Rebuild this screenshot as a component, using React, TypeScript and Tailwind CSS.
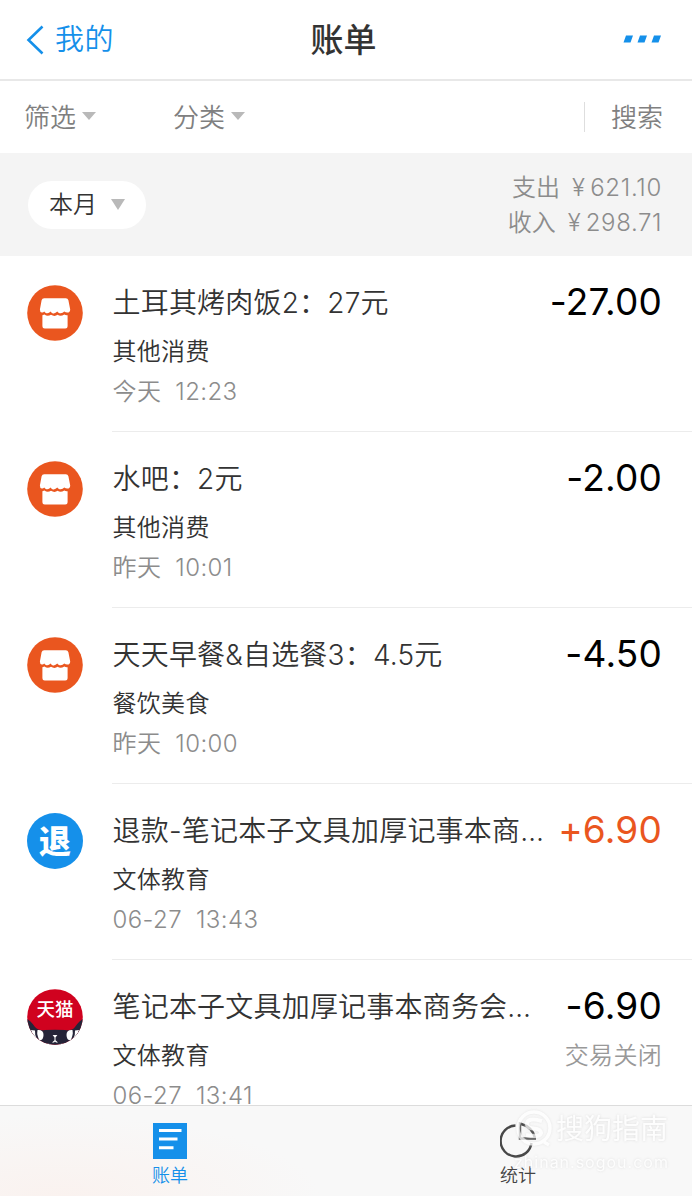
import React from "react";

type Kind = "shop" | "refund" | "tmall";

interface Bill {
  kind: Kind;
  title: string;
  truncated?: boolean;
  amount: string;
  income?: boolean;
  category: string;
  day: string;
  time: string;
  status?: string;
}

const bills: Bill[] = [
  { kind: "shop", title: "土耳其烤肉饭2：27元", amount: "-27.00", category: "其他消费", day: "今天", time: "12:23" },
  { kind: "shop", title: "水吧：2元", amount: "-2.00", category: "其他消费", day: "昨天", time: "10:01" },
  { kind: "shop", title: "天天早餐&自选餐3：4.5元", amount: "-4.50", category: "餐饮美食", day: "昨天", time: "10:00" },
  { kind: "refund", title: "退款-笔记本子文具加厚记事本商", truncated: true, amount: "+6.90", income: true, category: "文体教育", day: "06-27", time: "13:43" },
  { kind: "tmall", title: "笔记本子文具加厚记事本商务会", truncated: true, amount: "-6.90", category: "文体教育", day: "06-27", time: "13:41", status: "交易关闭" },
];

function Triangle({ className }: { className: string }) {
  return (
    <svg viewBox="0 0 14 10" preserveAspectRatio="none" className={className}>
      <path d="M0 0H14L7 10Z" fill="#b9b9b9" />
    </svg>
  );
}

function ShopIcon() {
  return (
    <svg viewBox="0 0 56 56" className="size-14">
      <circle cx="28" cy="28" r="27.8" fill="#ea561f" />
      <path
        d="M17.2 13.3H38.8Q40.9 13.3 41.4 15.3L43.2 24.5Q43.2 27.6 40.3 27.6Q38.6 27.6 37.3 26.6Q35.2 28.9 32.5 28.2Q31 27.6 30.3 26.6Q28.1 29 25.4 28.2Q24.2 27.6 23.6 26.6Q21.5 28.9 18.8 28Q17.8 27.4 17.2 26.6Q16.2 27.8 14.8 27.5Q12.8 27 12.9 24.5L14.6 15.3Q15.1 13.3 17.2 13.3Z"
        fill="#fff"
      />
      <path
        d="M15.4 30.2Q17 29.6 17.5 29.6Q20.5 32 24 29.8Q27.5 32 30.6 29.8Q33.5 32 37.3 29.6Q38.6 30.4 40.6 30.2V41.2Q40.6 43.5 38.3 43.5H17.7Q15.4 43.5 15.4 41.2Z"
        fill="#fff"
      />
    </svg>
  );
}

function RefundIcon() {
  return (
    <div className="flex size-14 items-center justify-center rounded-full bg-[#1590ea] pt-0.5 text-[32px] leading-[54px] font-black text-white">
      退
    </div>
  );
}

function TmallIcon() {
  return (
    <svg viewBox="0 0 56 56" className="size-14">
      <defs>
        <clipPath id="round">
          <circle cx="28" cy="28" r="27.8" />
        </clipPath>
      </defs>
      <g clipPath="url(#round)">
        <rect width="56" height="56" fill="#d0021f" />
        <path d="M0 30Q3 31 8 38Q12 42 18 41Q28 40.3 38 41Q45 42 48 38Q53 31 56 30V56H0Z" fill="#252438" />
        <path d="M10.5 41Q16.5 40.5 16.500 46Q16.500 51 12.500 51.500Q9.500 46 10.500 41Z" fill="#fff" />
        <path d="M45.500 41Q39.500 40.500 39.500 46Q39.500 51 43.500 51.500Q46.500 46 45.500 41Z" fill="#fff" />
        <path d="M4 41L8 41.500Q7.500 46 10 50Q6 47 4 41Z" fill="#fff" />
        <path d="M52 41L48 41.500Q48.500 46 46 50Q50 47 52 41Z" fill="#fff" />
        <path d="M25.600 46H30.400L28.500 48.600V51.200L31 53.500H29L28 52.500L27 53.500H25L27.500 51.200V48.600Z" fill="#fff" />
        <path d="M17 56Q21 53.500 25 56ZM39 56Q35 53.500 31 56Z" fill="#fff" />
      </g>
      <text x="28" y="26.500" textAnchor="middle" fontSize="18.500" fontWeight="500" fill="#fff">
        天猫
      </text>
    </svg>
  );
}

function BillIcon({ kind }: { kind: Kind }) {
  if (kind === "shop") return <ShopIcon />;
  if (kind === "refund") return <RefundIcon />;
  return <TmallIcon />;
}

function BillRow({ bill }: { bill: Bill }) {
  return (
    <div className="flex h-44 shrink-0 pl-[27px]">
      <div className="w-[85px] shrink-0 pt-[29px]">
        <BillIcon kind={bill.kind} />
      </div>
      <div className="min-w-0 flex-1 border-b border-[#ececec] pt-[26px] pr-[30px] pl-[0.5px]">
        <div className="flex h-10 items-center justify-between whitespace-nowrap">
          <span className="pt-0.5 text-[28px] leading-10 tracking-[0.2px] text-[#333]">
            {bill.title}
            {bill.truncated && <span className="tracking-[3px]">…</span>}
          </span>
          <span
            className={
              bill.income
                ? "text-[37px] leading-10 font-normal tracking-[0.2px] text-[#ea561f]"
                : "text-[37px] leading-10 font-normal tracking-[0.2px] text-black"
            }
          >
            {bill.amount}
          </span>
        </div>
        <div className="mt-2.5 flex h-10 items-center justify-between">
          <span className="text-2xl leading-10 tracking-[0.3px] text-[#333]">{bill.category}</span>
          {bill.status && <span className="text-2xl leading-10 tracking-[0.3px] text-[#999]">{bill.status}</span>}
        </div>
        <div className="flex h-10 items-center gap-3.5 text-2xl leading-10 tracking-[0.4px] text-[#8c8c8c]">
          <span>{bill.day}</span>
          <span>{bill.time}</span>
        </div>
      </div>
    </div>
  );
}

function Watermark() {
  return (
    <div className="absolute top-0.5 left-[514px] flex flex-col font-normal text-white opacity-75 [text-shadow:0_0_3px_#d0d0d0]">
      <div className="flex items-center gap-0.5">
        <svg viewBox="0 0 40 40" className="size-10 [filter:drop-shadow(0_0_1px_#ddd)]">
          <circle cx="20" cy="19" r="16" fill="none" stroke="#fff" strokeWidth="3.5" />
          <path d="M28 12Q13 8 13 15Q13 19 20 19.500Q27 20 27 24Q26 29 12 26" fill="none" stroke="#fff" strokeWidth="4" />
          <path d="M30 33L35 36" stroke="#fff" strokeWidth="3.500" />
        </svg>
        <span className="text-[28px] leading-[42px]">搜狗指南</span>
      </div>
      <span className="text-base leading-6 tracking-[1px]">zhinan.sogou.com</span>
    </div>
  );
}

export default function App() {
  return (
    <div className="flex h-[1196px] w-[692px] flex-col overflow-hidden bg-white font-['Inter','Noto_Sans_CJK_SC',sans-serif] font-[350]">
      <header className="flex h-[81px] shrink-0 items-center border-b-2 border-[#e8e8e8] pr-[31px] pl-[26px]">
        <div className="flex flex-1 items-center gap-[11px] text-[#1590ea]">
          <svg viewBox="0 0 18 30" className="h-[30px] w-[18px]">
            <path d="M16.500 1.500L2.500 15L16.500 28.500" fill="none" stroke="currentColor" strokeWidth="2.600" />
          </svg>
          <span className="text-[29px] leading-10 tracking-[0.5px]">我的</span>
        </div>
        <h1 className="text-[33px] leading-10 font-medium text-[#333]">账单</h1>
        <div className="flex flex-1 justify-end">
          <svg viewBox="0 0 38 8" className="mb-0.5 h-2 w-[38px] fill-[#1590ea]">
            <path d="M3 0.500H10L7.500 7.500H0.500ZM17 0.500H24L21.500 7.500H14.500ZM31 0.500H38L35.500 7.500H28.500Z" />
          </svg>
        </div>
      </header>

      <nav className="flex h-[72px] shrink-0 items-center pt-0.5 pr-[29px] pl-6 text-[26px] leading-10 text-[#808080]">
        <div className="flex w-[149px] items-center gap-1.5">
          筛选
          <Triangle className="mb-1 h-2 w-3.5" />
        </div>
        <div className="flex items-center gap-1.5">
          分类
          <Triangle className="mb-1 h-2 w-3.5" />
        </div>
        <div className="ml-auto flex items-center gap-[26px]">
          <span className="mb-0.5 h-[30px] w-px bg-[#dedede]" />
          搜索
        </div>
      </nav>

      <section className="flex h-[103px] shrink-0 items-center justify-between bg-[#f4f4f4] pr-[30px] pl-7">
        <div className="flex h-12 w-[118px] items-center gap-3.5 rounded-full bg-white pl-[21px] text-2xl leading-10 text-[#333]">
          本月
          <Triangle className="h-[11px] w-3.5" />
        </div>
        <div className="flex flex-col items-end text-2xl leading-[35px] text-[#8c8c8c]">
          <div className="flex gap-3">
            <span>支出</span>
            <span className="tracking-[0.7px] [word-spacing:-3px]">¥ 621.10</span>
          </div>
          <div className="flex gap-3">
            <span>收入</span>
            <span className="tracking-[0.6px] [word-spacing:-3px]">¥ 298.71</span>
          </div>
        </div>
      </section>

      <main className="flex min-h-0 flex-1 flex-col overflow-hidden">
        {bills.map((bill) => (
          <BillRow key={bill.title} bill={bill} />
        ))}
      </main>

      <footer className="relative flex h-[91px] shrink-0 border-t border-[#dcdcdc] bg-[#f8f8f8] bg-[radial-gradient(260px_80px_at_60px_100%,#faf2ef_0%,#f8f8f8_100%)]">
        <div className="flex w-[340px] flex-col items-center pt-[17px] text-[#1590ea]">
          <svg viewBox="0 0 34 36" className="h-9 w-[34px]">
            <rect width="34" height="36" fill="currentColor" />
            <path d="M6 7.500H28.500M6 16H24.500M6 24.700H20.500" stroke="#fff" strokeWidth="3" />
          </svg>
          <span className="mt-[5px] text-lg leading-6">账单</span>
        </div>
        <div className="flex flex-1 flex-col items-center pt-[15px] pl-1 text-[#444]">
          <svg viewBox="0 0 36 38" className="h-[38px] w-9" fill="none" stroke="#484848" strokeWidth="2.400">
            <path d="M15.500 4.500A15.500 15.500 0 1 0 31.500 22" />
            <path d="M20 2.500V17.500H35Q33 6 20 2.500Z" />
          </svg>
          <span className="mt-[5px] text-lg leading-6">统计</span>
        </div>
        <Watermark />
      </footer>
    </div>
  );
}
